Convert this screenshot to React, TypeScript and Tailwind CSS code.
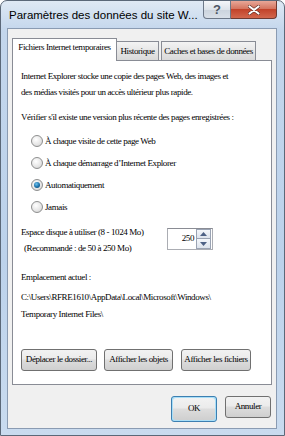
import { useState } from 'react'

const serif = { fontFamily: '"Liberation Serif", "Times New Roman", serif' }

const options = [
  'À chaque visite de cette page Web',
  'À chaque démarrage d\u2019Internet Explorer',
  'Automatiquement',
  'Jamais',
]

function Radio({ checked }: { checked: boolean }) {
  return (
    <span className="flex h-[12px] w-[12px] shrink-0 items-center justify-center rounded-full border border-[#8e8f8f] bg-[radial-gradient(circle_at_40%_35%,#ffffff,#e4e4e4_60%,#c9c9c9)]">
      {checked && (
        <span className="h-[6px] w-[6px] rounded-full bg-[radial-gradient(circle_at_40%_35%,#6fc3ee,#1a6fa8_55%,#0b3e63)]" />
      )}
    </span>
  )
}

function Btn({ children, w, className = '' }: { children: React.ReactNode; w: string; className?: string }) {
  return (
    <div
      className={`flex h-[22px] items-center justify-center rounded-[3px] border border-[#707070] bg-[linear-gradient(#f2f2f2,#ebebeb_45%,#dddddd_50%,#cfcfcf)] text-[9px] tracking-[-0.4px] text-black ${w} ${className}`}
      style={serif}
    >
      {children}
    </div>
  )
}

export default function App() {
  const [choice, setChoice] = useState(2)

  return (
    <div className="h-[436px] w-[285px] overflow-hidden rounded-t-[7px] border border-[#5b6878] bg-[linear-gradient(180deg,#dfe9f4_0px,#c3d6ec_30px,#bcd2eb_60%,#c9dbef)] pl-[6px] pr-[7px]">
      {/* title bar */}
      <div className="flex h-[27px] items-start">
        <span className="min-w-0 flex-1 overflow-hidden whitespace-nowrap pl-[2px] pt-[6px] text-[11.5px] leading-[16px] text-black" style={{ fontFamily: '"Liberation Sans", Arial, sans-serif' }}>
          Paramètres des données du site W...
        </span>
        <div className="flex h-[18px] w-[28px] items-center justify-center rounded-bl-[4px] border border-t-0 border-[#6d7888] bg-[linear-gradient(#f4f6f9,#dde3ea_50%,#cbd3dd_51%,#d9e0e8)]">
          <span className="text-[13px] font-bold leading-none text-[#4d5663]" style={{ fontFamily: '"Liberation Sans", Arial, sans-serif' }}>?</span>
        </div>
        <div className="flex h-[18px] w-[46px] items-center justify-center rounded-br-[4px] border border-l-0 border-t-0 border-[#6e3a32] bg-[linear-gradient(#e8a798,#d47560_45%,#c2432a_50%,#d2674d)]">
          <svg width="12" height="10" viewBox="0 0 12 10">
            <path d="M1.5 1.5 L10.5 8.5 M10.5 1.5 L1.5 8.5" stroke="#5a2a22" strokeWidth="3.4" strokeLinecap="round" />
            <path d="M1.5 1.5 L10.5 8.5 M10.5 1.5 L1.5 8.5" stroke="#ffffff" strokeWidth="2.2" strokeLinecap="round" />
          </svg>
        </div>
      </div>

      {/* dialog body */}
      <div className="h-[401px] border border-[#8a9bb2] bg-[#f0f0f0] px-[4px] pt-[9px]">
        {/* tabs */}
        <div className="flex items-end text-[9px] tracking-[-0.4px] text-black" style={serif}>
          <div className="relative z-10 -mb-px flex h-[23px] w-[105px] items-start justify-center border border-b-0 border-[#898c95] bg-white pt-[2px]">
            Fichiers Internet temporaires
          </div>
          <div className="flex h-[19px] w-[42px] items-center justify-center border border-b-0 border-l-0 border-[#898c95] bg-[linear-gradient(#f3f3f3,#e6e6e6_50%,#d9d9d9)] pt-px">
            Historique
          </div>
          <div className="ml-[2px] flex h-[19px] w-[95px] items-center justify-center border border-b-0 border-[#898c95] bg-[linear-gradient(#f3f3f3,#e6e6e6_50%,#d9d9d9)] pt-px">
            Caches et bases de données
          </div>
        </div>

        {/* panel */}
        <div className="h-[325px] border border-[#898c95] bg-white px-[8px] pt-[7px] text-[9px] tracking-[-0.4px] text-black" style={serif}>
          <p className="leading-[16px]">
            Internet Explorer stocke une copie des pages Web, des images et
            <br />
            des médias visités pour un accès ultérieur plus rapide.
          </p>
          <p className="mt-[9px] leading-[16px]">Vérifier s&apos;il existe une version plus récente des pages enregistrées :</p>

          <div className="mt-[5px] flex flex-col pl-[10px]">
            {options.map((o, i) => (
              <label key={o} className="flex h-[22px] items-center gap-[2px]" onClick={() => setChoice(i)}>
                <Radio checked={choice === i} />
                <span className="leading-[16px]">{o}</span>
              </label>
            ))}
          </div>

          <div className="mt-[6px] flex items-start">
            <div className="w-[146px] leading-[16px]">
              <div>Espace disque à utiliser (8 - 1024 Mo)</div>
              <div className="pl-[3px]">(Recommandé : de 50 à 250 Mo)</div>
            </div>
            <div className="mt-[4px] flex h-[22px] w-[46px] items-center border border-[#abadb3] border-t-[#8a8c94] bg-white">
              <span className="flex-1 pr-[2px] text-right">250</span>
              <div className="flex flex-col gap-0 pr-px">
                <div className="flex h-[10px] w-[15px] items-center justify-center border border-[#9aa3b3] bg-[linear-gradient(#f4f7fb,#dde3ec)]">
                  <svg width="7" height="4" viewBox="0 0 7 4"><path d="M0 4 L3.5 0 L7 4 Z" fill="#4d6185" /></svg>
                </div>
                <div className="flex h-[10px] w-[15px] items-center justify-center border border-t-0 border-[#9aa3b3] bg-[linear-gradient(#f4f7fb,#dde3ec)]">
                  <svg width="7" height="4" viewBox="0 0 7 4"><path d="M0 0 L3.5 4 L7 0 Z" fill="#4d6185" /></svg>
                </div>
              </div>
            </div>
          </div>

          <div className="mt-[13px] leading-[16px]">Emplacement actuel :</div>
          <div className="mt-[4px] leading-[17px]">
            <div>C:\Users\RFRE1610\AppData\Local\Microsoft\Windows\</div>
            <div>Temporary Internet Files\</div>
          </div>

          <div className="mt-[26px] flex">
            <Btn w="w-[76px]">Déplacer le dossier...</Btn>
            <Btn w="w-[69px]" className="ml-[7px]">Afficher les objets</Btn>
            <Btn w="w-[70px]" className="ml-[8px]">Afficher les fichiers</Btn>
          </div>
        </div>

        {/* dialog buttons */}
        <div className="mt-[11px] flex justify-end pr-px">
          <div className="rounded-[3px] border border-[#3c7fb1] p-px bg-[#a9def7]">
            <Btn w="w-[42px]" className="h-[20px] border-0 rounded-[2px]">OK</Btn>
          </div>
          <Btn w="w-[46px]" className="ml-[8px]">Annuler</Btn>
        </div>
      </div>
    </div>
  )
}
